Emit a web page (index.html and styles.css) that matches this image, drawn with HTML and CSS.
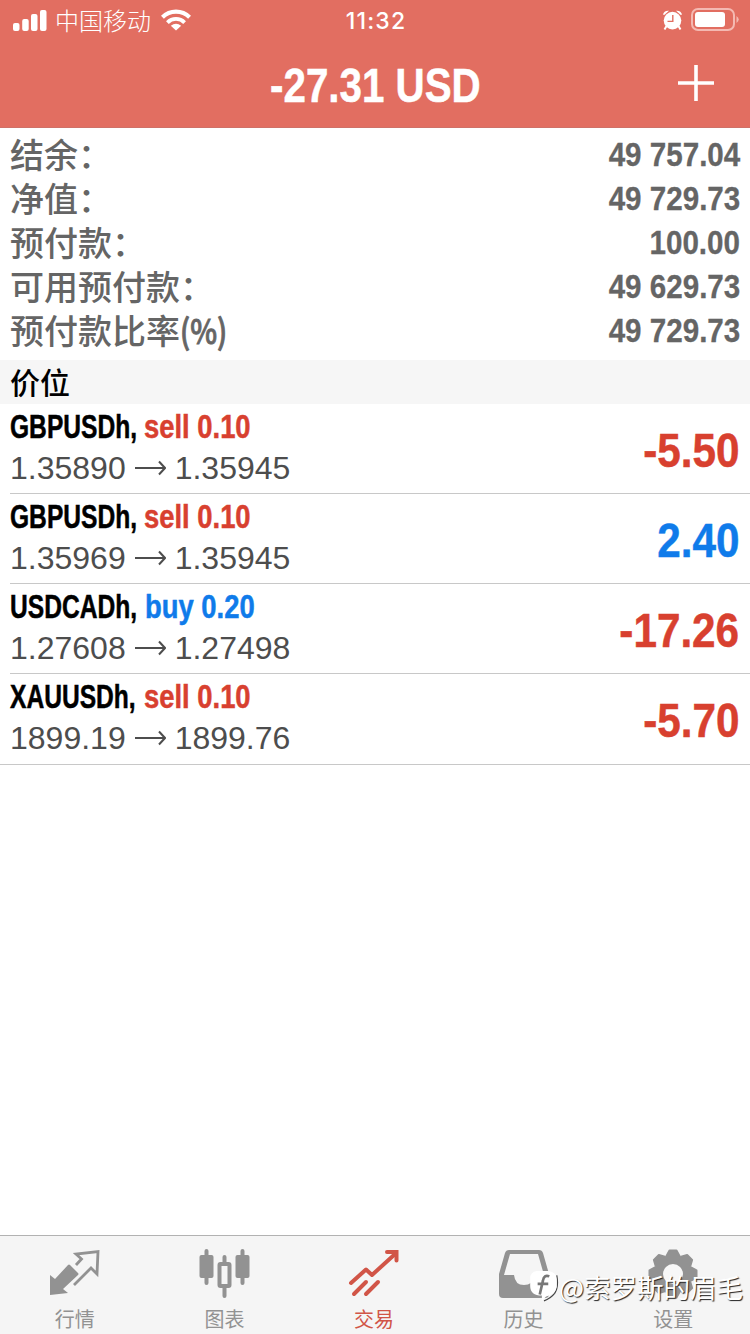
FILE: index.html
```html
<!DOCTYPE html>
<html lang="zh-CN">
<head>
    <meta charset="UTF-8">
    <meta name="viewport" content="width=device-width, initial-scale=1.0">
    <title>交易</title>
    <link rel="stylesheet" href="styles.css">
</head>
<body>
    <header class="header">
        <div class="status-bar">
            <div class="status-left">
                <svg class="signal" width="34" height="22" viewBox="0 0 34 22" fill="#fff">
                    <rect x="0" y="14" width="6.5" height="8" rx="2"/>
                    <rect x="9.2" y="10" width="6.5" height="12" rx="2"/>
                    <rect x="18" y="5" width="6.5" height="17" rx="2"/>
                    <rect x="27" y="1" width="6.5" height="21" rx="2"/>
                </svg>
                <span class="carrier">中国移动</span>
                <svg class="wifi" width="30" height="22" viewBox="0 0 30 22">
                    <path d="M1.4 8.2A19.5 19.5 0 0 1 28.6 8.2" fill="none" stroke="#fff" stroke-width="4.2"/>
                    <path d="M6.4 13.6A12 12 0 0 1 23.6 13.6" fill="none" stroke="#fff" stroke-width="3.8"/>
                    <path d="M15 21.6L9.8 16.8Q15 12.8 20.2 16.8Z" fill="#fff"/>
                </svg>
            </div>
            <div class="time">11:32</div>
            <div class="status-right">
                <svg width="19" height="21" viewBox="0 0 19 21">
                    <path d="M0 4.5Q1 .2 6 .7L1.2 5ZM19 4.5Q18 .2 13 .7L17.8 5Z" fill="#fff"/>
                    <circle cx="9.5" cy="10.6" r="8.8" fill="#fff"/>
                    <path d="M3.5 16L1.5 19.5M15.5 16L17.5 19.5" stroke="#fff" stroke-width="2"/>
                    <path d="M9.8 5V11.4H4.5" fill="none" stroke="#e26e61" stroke-width="1.4"/>
                </svg>
                <svg class="battery" width="48" height="24" viewBox="0 0 48 24">
                    <rect x="1" y="1" width="42" height="21" rx="6" fill="none" stroke="#f4b9b2" stroke-width="2"/>
                    <rect x="4" y="4" width="30" height="15" rx="3" fill="#fff"/>
                    <path d="M45.5 8Q50 11.5 45.5 15Z" fill="#f4b9b2"/>
                </svg>
            </div>
        </div>
        <div class="title-bar">
            <h1 class="title">-27.31 USD</h1>
            <svg class="add" width="36" height="36" viewBox="0 0 36 36">
                <path d="M18 0V36M0 18H36" stroke="#fff" stroke-width="3.6"/>
            </svg>
        </div>
    </header>

    <main class="content">
        <div class="account">
            <div class="row"><span class="label">结余<span class="colon">：</span></span><span class="value">49 757.04</span></div>
            <div class="row"><span class="label">净值<span class="colon">：</span></span><span class="value">49 729.73</span></div>
            <div class="row"><span class="label">预付款<span class="colon">：</span></span><span class="value">100.00</span></div>
            <div class="row"><span class="label">可用预付款<span class="colon">：</span></span><span class="value">49 629.73</span></div>
            <div class="row"><span class="label">预付款比率<span class="percent">(%)</span></span><span class="value">49 729.73</span></div>
        </div>

        <h2 class="section">价位</h2>

        <div class="positions">
            <div class="position">
                <div class="info">
                    <div class="order"><span class="symbol">GBPUSDh,</span><span class="side sell">sell 0.10</span></div>
                    <div class="prices">
                        <span>1.35890</span>
                        <svg class="arrow" width="31" height="16" viewBox="0 0 31 16"><path d="M0 8H30M24 1.5L30 8L24 14.5"/></svg>
                        <span>1.35945</span>
                    </div>
                </div>
                <div class="profit loss">-5.50</div>
            </div>
            <div class="position">
                <div class="info">
                    <div class="order"><span class="symbol">GBPUSDh,</span><span class="side sell">sell 0.10</span></div>
                    <div class="prices">
                        <span>1.35969</span>
                        <svg class="arrow" width="31" height="16" viewBox="0 0 31 16"><path d="M0 8H30M24 1.5L30 8L24 14.5"/></svg>
                        <span>1.35945</span>
                    </div>
                </div>
                <div class="profit gain">2.40</div>
            </div>
            <div class="position">
                <div class="info">
                    <div class="order"><span class="symbol">USDCADh,</span><span class="side buy">buy 0.20</span></div>
                    <div class="prices">
                        <span>1.27608</span>
                        <svg class="arrow" width="31" height="16" viewBox="0 0 31 16"><path d="M0 8H30M24 1.5L30 8L24 14.5"/></svg>
                        <span>1.27498</span>
                    </div>
                </div>
                <div class="profit loss">-17.26</div>
            </div>
            <div class="position">
                <div class="info">
                    <div class="order"><span class="symbol">XAUUSDh,</span><span class="side sell">sell 0.10</span></div>
                    <div class="prices">
                        <span>1899.19</span>
                        <svg class="arrow" width="31" height="16" viewBox="0 0 31 16"><path d="M0 8H30M24 1.5L30 8L24 14.5"/></svg>
                        <span>1899.76</span>
                    </div>
                </div>
                <div class="profit loss">-5.70</div>
            </div>
        </div>
    </main>

    <nav class="tabs">
        <div class="tab">
            <svg width="52" height="50" viewBox="0 0 52 50">
                <path d="M1 26L6 30L19 16Q20 15 21 16L29 24Q30 25 29 26L14 40L19 44L1 46Z" fill="#929292"/>
                <path d="M27 16L32.500 10L27 5L49 2.500L48 25L42 19L25 36" fill="none" stroke="#929292" stroke-width="2.800"/>
            </svg>
            <span>行情</span>
        </div>
        <div class="tab">
            <svg width="52" height="50" viewBox="0 0 52 50">
                <path d="M8.500 2V34M44.500 2V34M26.500 8V15M26.500 38V47" stroke="#929292" stroke-width="4" stroke-linecap="round"/>
                <rect x="1.500" y="6" width="14" height="23" rx="2" fill="#929292"/>
                <rect x="37.500" y="6" width="14" height="23" rx="2" fill="#929292"/>
                <rect x="21.500" y="15" width="10" height="22" rx="1" fill="#f5f5f5" stroke="#929292" stroke-width="4"/>
            </svg>
            <span>图表</span>
        </div>
        <div class="tab active">
            <svg width="52" height="50" viewBox="0 0 52 50">
                <path d="M3 34L18 20.500L24 26L46 6" fill="none" stroke="#d15547" stroke-width="4" stroke-linecap="round" stroke-linejoin="round"/>
                <path d="M39 3H48.500V11.500" fill="none" stroke="#d15547" stroke-width="4" stroke-linecap="round"/>
                <path d="M18 33L6 45M30 33L18 45" stroke="#d15547" stroke-width="4" stroke-linecap="round"/>
            </svg>
            <span>交易</span>
        </div>
        <div class="tab">
            <svg width="52" height="50" viewBox="0 0 52 50">
                <path fill-rule="evenodd" d="M11 1H41Q44 1 45 4L51 25V45Q51 49 47 49H5Q1 49 1 45V25L7 4Q8 1 11 1ZM12 5L6 26H16Q17 36 26 36Q35 36 36 26H46L40 5Z" fill="#929292"/>
            </svg>
            <span>历史</span>
        </div>
        <div class="tab">
            <svg width="52" height="50" viewBox="0 0 52 50">
                <g fill="#929292" stroke="#929292" stroke-width="2" stroke-linejoin="round">
                    <path id="teeth" d="M19.500 7L22.500 1.500H29.500L32.500 7V43L29.500 48.500H22.500L19.500 43Z"/>
                    <use href="#teeth" transform="rotate(45 26 25)"/>
                    <use href="#teeth" transform="rotate(90 26 25)"/>
                    <use href="#teeth" transform="rotate(135 26 25)"/>
                </g>
                <circle cx="26" cy="25" r="10" fill="#f7f7f7"/>
            </svg>
            <span>设置</span>
        </div>
    </nav>

    <div class="watermark">
        <svg width="30" height="34" viewBox="0 0 28 32">
            <path d="M26 5Q28 16 24 22Q20 27 14 29" fill="none" stroke="#444" stroke-width="1.200"/>
            <path d="M7 1H18Q26 2 26 9V16Q25 23 16 25L12 29V24Q1 24 1 15V8Q1 2 7 1Z" fill="#fff"/>
            <path d="M19 6Q14 4 13 10L10 23M8 13H18" fill="none" stroke="#777" stroke-width="2.500"/>
        </svg>
        <span>@索罗斯的眉毛</span>
    </div>
</body>
</html>
```
FILE: styles.css
```css
* {
    box-sizing: border-box;
}

body {
    font-family: "Liberation Sans", "Noto Sans CJK SC", sans-serif;
    background-color: #fff;
    color: #000;
    margin: 0;
    height: 1334px;
    display: flex;
    flex-direction: column;
    position: relative;
    overflow: hidden;
}

svg {
    display: block;
    flex-shrink: 0;
}

.header {
    height: 128px;
    background-color: #e26e61;
    color: #fff;
    border-bottom: 1px solid #cf7168;
}

.status-bar {
    height: 40px;
    display: grid;
    grid-template-columns: 1fr 80px 1fr;
    align-items: center;
    padding: 0 11px 0 13px;
}

.status-left, .status-right {
    display: flex;
    align-items: center;
}

.signal {
    margin-right: 8px;
}

.carrier {
    font-family: "Noto Sans CJK SC", sans-serif;
    font-size: 24px;
    font-weight: 300;
    line-height: 40px;
    margin-right: 10px;
}

.time {
    font-family: Inter, sans-serif;
    font-size: 23px;
    font-weight: 500;
    letter-spacing: 1.2px;
    text-align: center;
    padding-top: 2px;
}

.status-right {
    justify-content: flex-end;
    gap: 9px;
}

.title-bar {
    height: 88px;
    display: grid;
    grid-template-columns: 1fr auto 1fr;
    align-items: center;
    padding: 0 36px;
}

.title {
    grid-column: 2;
    font-size: 48px;
    line-height: 84px;
    margin: 4px 0 0;
    transform: scaleX(0.84);
    -webkit-text-stroke: 0.5px;
}

.add {
    justify-self: end;
    margin-bottom: 2px;
}

.content {
    flex: 1;
}

.account {
    height: 232px;
    padding: 3px 10px 0;
    color: #656565;
}

.row {
    height: 44px;
    display: flex;
    justify-content: space-between;
}

.label {
    font-family: "Noto Sans CJK SC", sans-serif;
    font-size: 34px;
    font-weight: 500;
    line-height: 45px;
}

.percent {
    display: inline-block;
    transform: scaleX(0.84);
    transform-origin: left;
    -webkit-text-stroke: 0.9px;
}

.value {
    font-size: 34px;
    font-weight: bold;
    line-height: 46px;
    transform: scaleX(0.87);
    transform-origin: right;
    -webkit-text-stroke: 0.3px;
}

.section {
    height: 44px;
    margin: 0;
    padding-left: 10px;
    background-color: #f6f6f6;
    font-family: "Noto Sans CJK SC", sans-serif;
    font-size: 30px;
    font-weight: 500;
    line-height: 43px;
}

.positions {
    padding-left: 10px;
    border-bottom: 1px solid #c8c8c8;
}

.position {
    height: 90px;
    display: flex;
    justify-content: space-between;
    padding-right: 11px;
    border-bottom: 1px solid #c8c8c8;
}

.position:last-child {
    border-bottom: none;
}

.order {
    display: flex;
    height: 42px;
    font-size: 33px;
    font-weight: bold;
    line-height: 46px;
    white-space: nowrap;
    -webkit-text-stroke: 0.5px;
}

/* condensed bold */
.symbol {
    width: 134px;
    transform: scaleX(0.745);
    transform-origin: left;
}

.side {
    transform: scaleX(0.83);
    transform-origin: left;
}

.buy {
    margin-left: 1px;
}

.sell, .loss {
    color: #d8402f;
}

.buy, .gain {
    color: #0f7bea;
}

.prices {
    display: flex;
    align-items: center;
    gap: 9px;
    color: #4d4d4d;
    font-size: 32px;
    line-height: 44px;
}

.arrow path {
    fill: none;
    stroke: #4d4d4d;
    stroke-width: 2;
}

.profit {
    font-size: 48px;
    font-weight: bold;
    line-height: 94px;
    transform: scaleX(0.88);
    transform-origin: right;
    -webkit-text-stroke: 0.5px;
}

.tabs {
    height: 99px;
    display: flex;
    padding-right: 2px;
    background-color: #f5f5f5;
    border-top: 1px solid #b2b2b2;
}

.tab {
    flex: 1;
    display: flex;
    flex-direction: column;
    align-items: center;
    padding-top: 13px;
    color: #929292;
    font-family: "Noto Sans CJK SC", sans-serif;
    font-size: 20px;
    line-height: 40px;
}

.tab.active {
    color: #d15547;
}

/* watermark lies over the tab bar */
.watermark {
    position: absolute;
    right: 7px;
    bottom: 27px;
    display: flex;
    align-items: center;
    color: #fff;
    font-family: "Noto Sans CJK SC", sans-serif;
    font-size: 26.5px;
    line-height: 40px;
    text-shadow: 1px 1px 1px #222;
}
```
